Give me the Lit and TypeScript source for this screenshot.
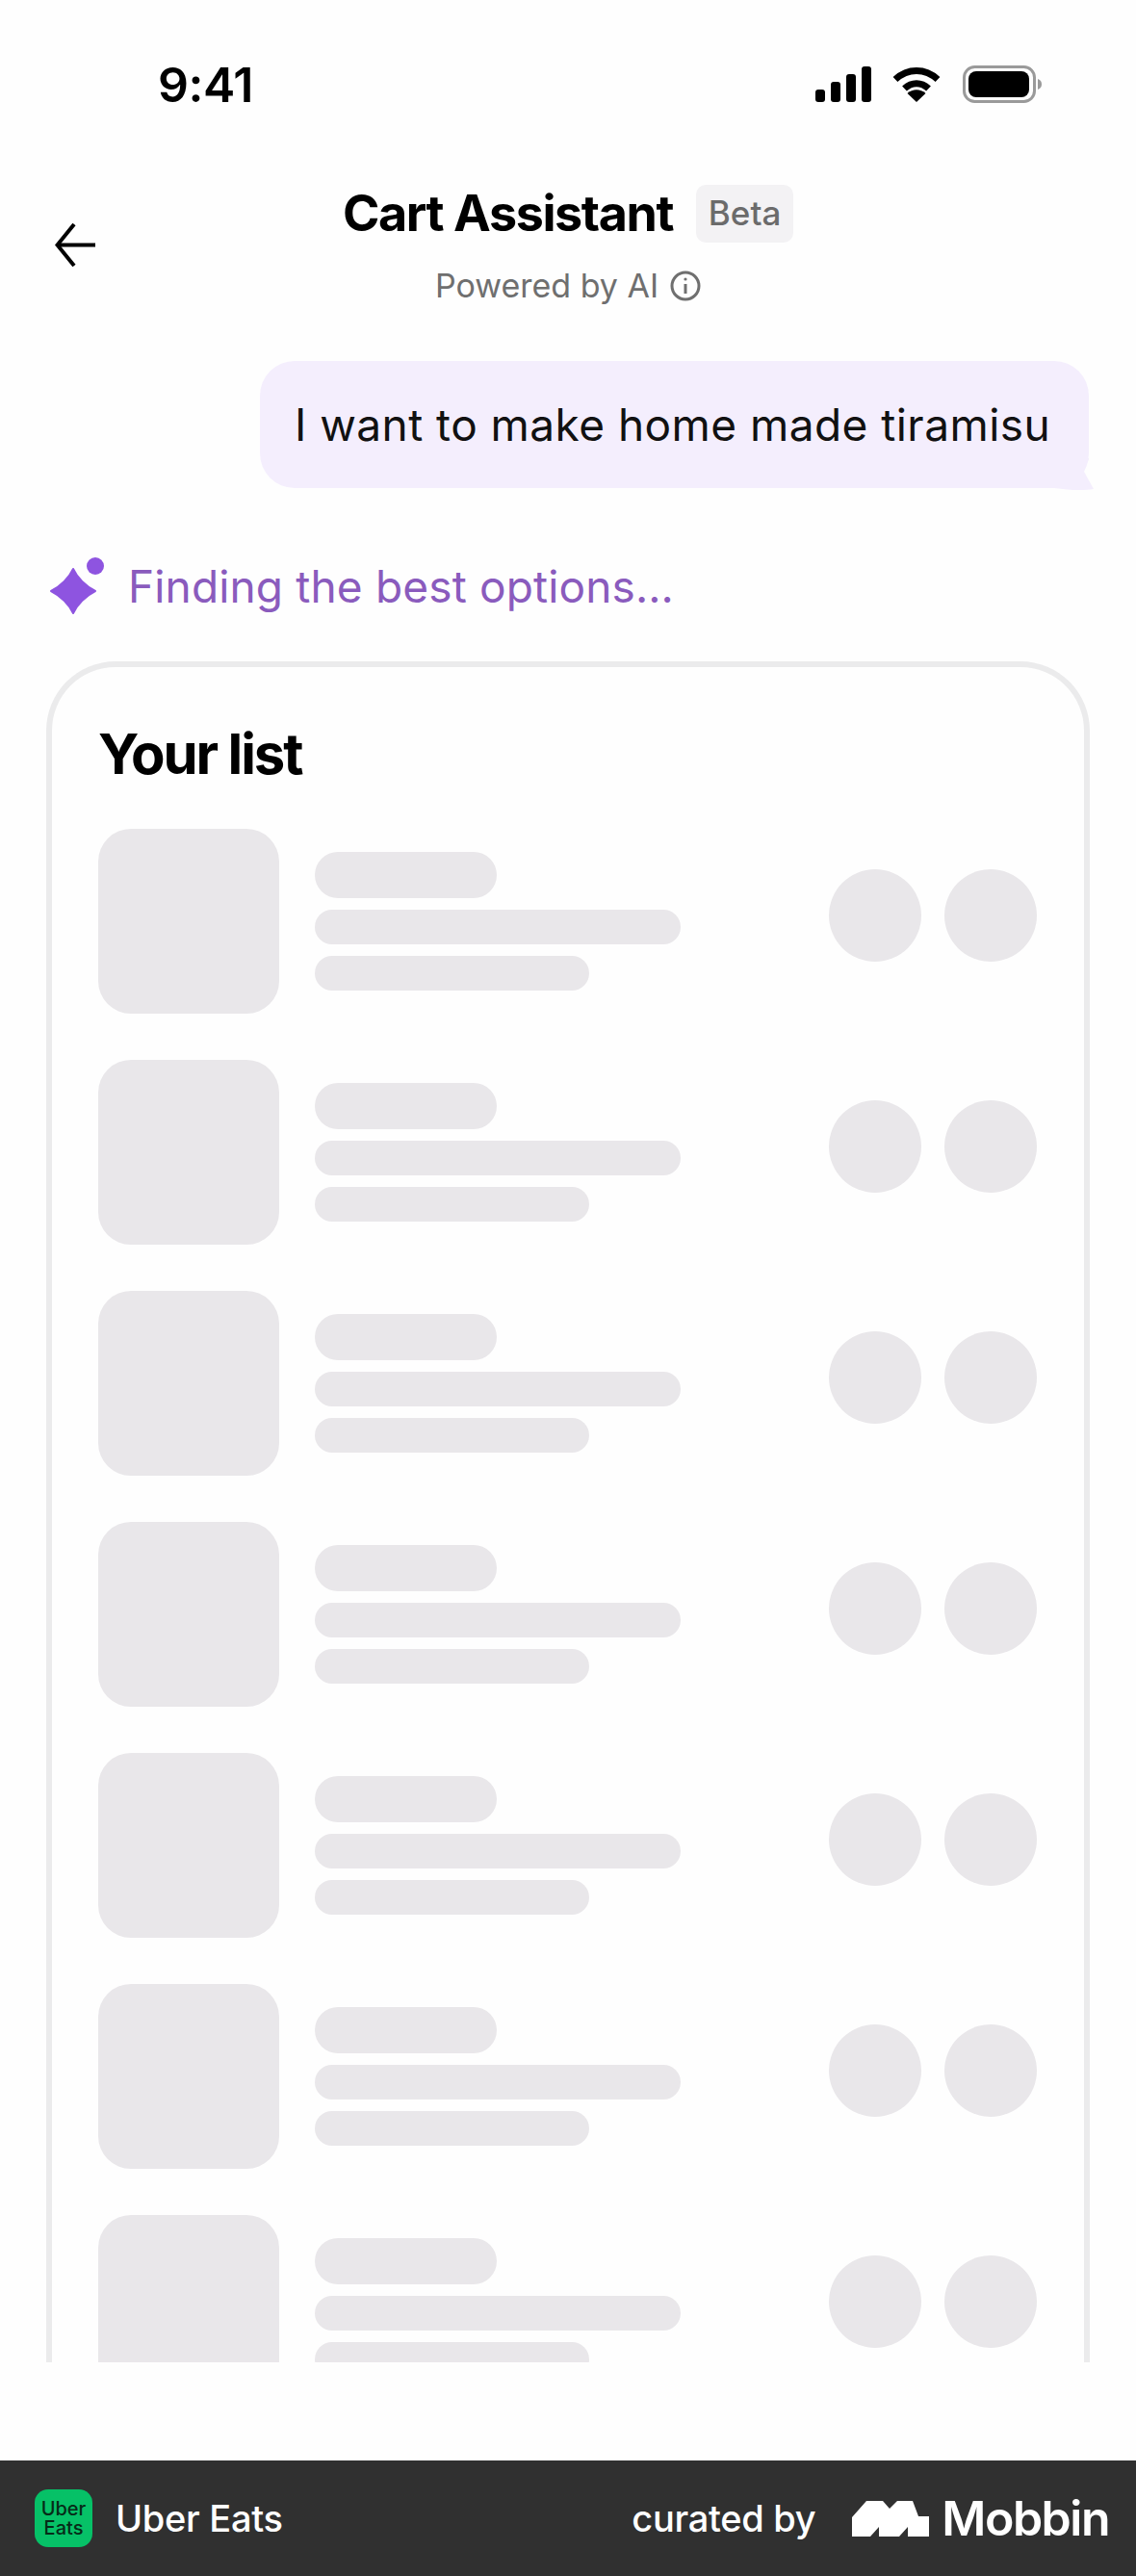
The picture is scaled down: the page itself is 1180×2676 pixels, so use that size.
import { LitElement, html, css } from "lit";
import { customElement } from "lit/decorators.js";

const ROWS = [0, 1, 2, 3, 4, 5, 6];

@customElement("app-root")
export class AppRoot extends LitElement {
  private renderRow(_: number) {
    return html`
      <div class="row">
        <div class="thumb"></div>
        <div class="bars">
          <div class="bar b1"></div>
          <div class="bar b2"></div>
          <div class="bar b3"></div>
        </div>
        <div class="dots">
          <div class="dot"></div>
          <div class="dot"></div>
        </div>
      </div>
    `;
  }

  protected render() {
    return html`
      <div class="screen">
        <div class="status">
          <span class="time">9:41</span>
          <div class="status-icons">
            <svg width="58" height="37" viewBox="0 0 58 37" fill="#000">
              <rect x="0" y="24" width="10" height="13" rx="3" />
              <rect x="16" y="16" width="10" height="21" rx="3" />
              <rect x="32" y="8" width="10" height="29" rx="3" />
              <rect x="48" y="0" width="10" height="37" rx="3" />
            </svg>
            <svg class="wifi" width="50" height="37" viewBox="0 0 50 37" fill="none" stroke="#000">
              <path d="M3 13.5 C16 1.5 34 1.5 47 13.5" stroke-width="7" />
              <path d="M12.5 23 C20 16 30 16 37.5 23" stroke-width="7" />
              <path d="M15.5 28 L25 37 L34.5 28 C29 23 21 23 15.5 28 Z" fill="#000" stroke="none" />
            </svg>
            <svg class="battery" width="82" height="39" viewBox="0 0 82 39">
              <rect x="1.5" y="1.5" width="73" height="36" rx="11" fill="none" stroke="#9a9a9a" stroke-width="3" />
              <rect x="6" y="6" width="63" height="27" rx="8" fill="#000" />
              <path d="M78 14 C81 15 82 17 82 19.5 C82 22 81 24 78 25 Z" fill="#9a9a9a" />
            </svg>
          </div>
        </div>

        <header class="nav">
          <svg class="back" width="42" height="45" viewBox="0 0 42 45" fill="none" stroke="#000" stroke-width="4">
            <path d="M42 22.5 H3" />
            <path d="M20 1 L2.5 22.5 L20 44" />
          </svg>
          <div class="title-line">
            <span class="title">Cart Assistant</span>
            <span class="beta">Beta</span>
          </div>
          <div class="sub-line">
            <span>Powered by AI</span>
            <svg width="32" height="32" viewBox="0 0 32 32" fill="none" stroke="#6f6f6f" stroke-width="3">
              <circle cx="16" cy="16" r="14" />
              <path d="M16 14 V24" />
              <circle cx="16" cy="9" r="1.6" fill="#6f6f6f" stroke="none" />
            </svg>
          </div>
        </header>

        <div class="bubble-wrap">
          <div class="bubble">
            I want to make home made tiramisu
            <svg class="tail" width="41" height="34" viewBox="0 0 41 34">
              <path d="M0 0 H36 V1 L31 14 L41 32 C30 34 14 33 0 31 Z" fill="#f4eefd" />
            </svg>
          </div>
        </div>

        <div class="finding">
          <svg width="58" height="60" viewBox="0 0 58 60" fill="#8e54e0">
            <circle cx="48" cy="9" r="9" />
            <path
              d="M25 12 C29 21 38 30 48 35 C38 40 29 49 25 58 C21 49 12 40 2 35 C12 30 21 21 25 12 Z"
              stroke="#8e54e0"
              stroke-width="2"
              stroke-linejoin="round"
            />
          </svg>
          <span>Finding the best options…</span>
        </div>

        <div class="card-clip">
          <section class="card">
            <h2>Your list</h2>
            <div class="rows">${ROWS.map((r) => this.renderRow(r))}</div>
          </section>
        </div>

        <footer class="footer">
          <div class="app">
            <div class="app-logo"><span>Uber</span><span>Eats</span></div>
            <span class="app-name">Uber Eats</span>
          </div>
          <div class="curated">
            <span class="by">curated by</span>
            <svg class="mark" width="80" height="37" viewBox="0 0 80 37" fill="#fff">
              <path d="M0 37 V17 L15 0 H32 L39 8 L47 0 H63 L69 16 H80 V37 H58 V27 L49 37 H28 V27 L19 37 Z" />
            </svg>
            <span class="mobbin">Mobbin</span>
          </div>
        </footer>
      </div>
    `;
  }

  static styles = css`
    :host {
      display: block;
      width: 1180px;
      height: 2676px;
      font-family: Inter, "Liberation Sans", sans-serif;
      background: #fff;
    }
    .screen {
      width: 1180px;
      height: 2676px;
      display: flex;
      flex-direction: column;
      overflow: hidden;
      background: #fefefe;
    }
    .status {
      height: 175px;
      flex: none;
      display: flex;
      justify-content: space-between;
      padding: 68px 98px 0 164px;
      box-sizing: border-box;
    }
    .time {
      font-size: 50px;
      line-height: 40px;
      font-weight: 600;
      letter-spacing: -0.5px;
      color: #000;
    }
    .status-icons {
      display: flex;
      gap: 22px;
      align-items: flex-start;
      padding-top: 1px;
    }
    .wifi {
      margin-right: 1px;
    }
    .battery {
      margin-top: -1px;
    }
    .nav {
      position: relative;
      height: 190px;
      flex: none;
      display: flex;
      flex-direction: column;
      align-items: center;
    }
    .back {
      position: absolute;
      left: 57px;
      top: 57px;
    }
    .title-line {
      display: flex;
      align-items: center;
      gap: 24px;
      margin-top: 17px;
    }
    .title {
      font-size: 52px;
      font-weight: 700;
      letter-spacing: -1.4px;
      color: #000;
      line-height: 60px;
      white-space: nowrap;
    }
    .beta {
      width: 101px;
      height: 60px;
      line-height: 58px;
      text-align: center;
      background: #f3f2f4;
      border-radius: 10px;
      font-size: 35px;
      font-weight: 500;
      color: #6b6b6b;
    }
    .sub-line {
      display: flex;
      align-items: center;
      gap: 12px;
      margin-top: 29px;
      font-size: 34px;
      line-height: 32px;
      color: #6f6f6f;
    }
    .bubble-wrap {
      flex: none;
      display: flex;
      justify-content: flex-end;
      padding-right: 49px;
      margin-top: 10px;
    }
    .bubble {
      position: relative;
      height: 132px;
      width: 861px;
      box-sizing: border-box;
      padding-left: 36px;
      display: flex;
      align-items: center;
      background: #f4eefd;
      border-radius: 36px;
      font-size: 46px;
      letter-spacing: 0.45px;
      color: #111;
      white-space: nowrap;
    }
    .tail {
      position: absolute;
      right: -5px;
      bottom: -3px;
    }
    .finding {
      flex: none;
      display: flex;
      align-items: center;
      gap: 24px;
      margin-top: 72px;
      padding-left: 51px;
      font-size: 46px;
      letter-spacing: 0.15px;
      color: #8a5bbd;
    }
    .card-clip {
      flex: none;
      height: 1767px;
      overflow: hidden;
      margin: 48px 48px 0;
    }
    .card {
      box-sizing: border-box;
      border: 6px solid #ebebec;
      border-bottom: 0;
      border-radius: 72px 72px 0 0;
      padding: 0 48px;
      height: 1900px;
    }
    h2 {
      margin: 0;
      padding-top: 59px;
      font-size: 58px;
      line-height: 62px;
      font-weight: 700;
      letter-spacing: -2.1px;
      color: #000;
    }
    .rows {
      display: flex;
      flex-direction: column;
      gap: 48px;
      margin-top: 47px;
    }
    .row {
      display: flex;
      align-items: flex-start;
      height: 192px;
    }
    .thumb {
      width: 188px;
      height: 192px;
      flex: none;
      border-radius: 34px;
      background: #e9e7ea;
    }
    .bars {
      display: flex;
      flex-direction: column;
      gap: 12px;
      margin-left: 37px;
      margin-top: 24px;
      width: 380px;
    }
    .bar {
      background: #e9e7ea;
      border-radius: 20px;
      height: 36px;
    }
    .b1 {
      width: 189px;
      height: 48px;
      border-radius: 24px;
    }
    .b2 {
      width: 380px;
    }
    .b3 {
      width: 285px;
    }
    .dots {
      display: flex;
      gap: 24px;
      margin-left: auto;
      margin-right: 1px;
      margin-top: 42px;
    }
    .dot {
      width: 96px;
      height: 96px;
      border-radius: 50%;
      background: #e9e7ea;
    }
    .footer {
      margin-top: auto;
      flex: none;
      height: 120px;
      background: #303030;
      color: #fff;
      display: flex;
      align-items: center;
      justify-content: space-between;
      padding: 0 28px 0 36px;
    }
    .app,
    .curated {
      display: flex;
      align-items: center;
    }
    .app-logo {
      width: 60px;
      height: 60px;
      border-radius: 14px;
      background: #06c167;
      color: #062b18;
      display: flex;
      flex-direction: column;
      align-items: center;
      justify-content: center;
      font-size: 20px;
      line-height: 20px;
      font-weight: 500;
    }
    .app-name {
      margin-left: 24px;
      font-size: 38px;
      font-weight: 500;
      letter-spacing: -0.3px;
    }
    .by {
      font-size: 38px;
      font-weight: 500;
      letter-spacing: -0.3px;
    }
    .mark {
      margin-left: 38px;
    }
    .mobbin {
      margin-left: 13px;
      font-size: 50px;
      font-weight: 600;
      letter-spacing: -1.5px;
    }
  `;
}
